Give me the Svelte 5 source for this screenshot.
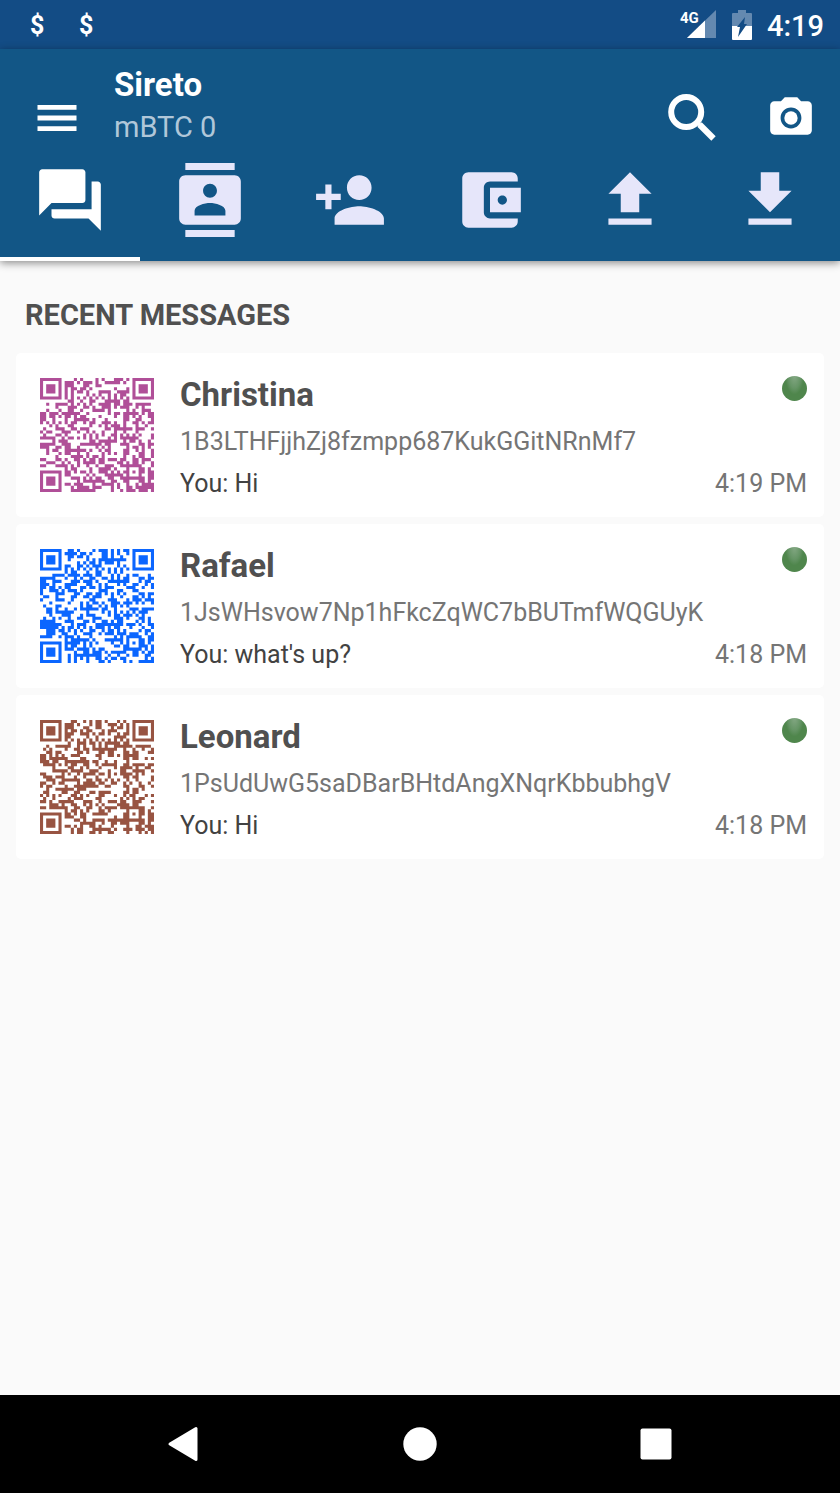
<script module>
  const EXP = new Array(512);
  const LOG = new Array(256);
  let value = 1;
  for (let i = 0; i < 255; i++) {
    EXP[i] = value;
    EXP[i + 255] = value;
    LOG[value] = i;
    value <<= 1;
    if (value & 256) value ^= 285;
  }
  const mul = (a, b) => (a && b ? EXP[LOG[a] + LOG[b]] : 0);

  // Reed-Solomon remainder of n codewords
  function ecc(data, n) {
    let gen = [1];
    for (let i = 0; i < n; i++) {
      const next = new Array(gen.length + 1).fill(0);
      gen.forEach((g, j) => {
        next[j] ^= g;
        next[j + 1] ^= mul(g, EXP[i]);
      });
      gen = next;
    }
    const rem = [...data, ...new Array(n).fill(0)];
    for (let i = 0; i < data.length; i++) {
      const f = rem[i];
      for (let j = 0; j < gen.length; j++) rem[i + j] ^= mul(gen[j], f);
    }
    return rem.slice(data.length);
  }

  const MASKS = {
    1: { format: '001001110111110', test: (r) => r % 2 === 0 },
    4: { format: '000011101100010', test: (r, c) => ((r >> 1) + Math.floor(c / 3)) % 2 === 0 }
  };

  // QR symbol version 5 (37 modules), correction level H, UTF-8 bytes
  function qr(text, mask) {
    const N = 37;
    const bits = [];
    const put = (v, n) => {
      for (let i = n - 1; i >= 0; i--) bits.push((v >> i) & 1);
    };
    put(7, 4);
    put(26, 8);
    put(4, 4);
    put(text.length, 8);
    for (const ch of text) put(ch.charCodeAt(0), 8);
    put(0, Math.min(4, 368 - bits.length));
    while (bits.length % 8) bits.push(0);
    const data = [];
    for (let i = 0; i < bits.length; i += 8) data.push(parseInt(bits.slice(i, i + 8).join(''), 2));
    for (let pad = 236; data.length < 46; pad ^= 253) data.push(pad);

    const blocks = [data.slice(0, 11), data.slice(11, 22), data.slice(22, 34), data.slice(34, 46)];
    const checks = blocks.map((b) => ecc(b, 22));
    const words = [];
    for (let i = 0; i < 12; i++) blocks.forEach((b) => i < b.length && words.push(b[i]));
    for (let i = 0; i < 22; i++) checks.forEach((b) => words.push(b[i]));

    const m = Array.from({ length: N }, () => new Array(N).fill(null));
    for (const [r0, c0] of [[0, 0], [0, N - 7], [N - 7, 0]])
      for (let r = -1; r < 8; r++)
        for (let c = -1; c < 8; c++) {
          if (r0 + r < 0 || c0 + c < 0 || r0 + r >= N || c0 + c >= N) continue;
          const d = Math.max(Math.abs(r - 3), Math.abs(c - 3));
          m[r0 + r][c0 + c] = d !== 2 && d !== 4 ? 1 : 0;
        }
    for (let r = -2; r <= 2; r++)
      for (let c = -2; c <= 2; c++) m[30 + r][30 + c] = Math.max(Math.abs(r), Math.abs(c)) !== 1 ? 1 : 0;
    for (let i = 8; i < N - 8; i++) m[6][i] = m[i][6] = i % 2 ? 0 : 1;
    const f = MASKS[mask].format.split('').map(Number);
    for (let i = 0; i < 15; i++) {
      if (i < 8) m[8][i < 6 ? i : i + 1] = f[i];
      else m[i === 8 ? 7 : 14 - i][8] = f[i];
      if (i < 7) m[N - 1 - i][8] = f[i];
      else m[8][N - 15 + i] = f[i];
    }
    m[N - 8][8] = 1;

    let k = 0;
    let up = true;
    for (let c = N - 1; c > 0; c -= 2) {
      if (c === 6) c = 5;
      for (let i = 0; i < N; i++) {
        const r = up ? N - 1 - i : i;
        for (const cc of [c, c - 1]) {
          if (m[r][cc] !== null) continue;
          const bit = k < words.length * 8 ? (words[k >> 3] >> (7 - (k & 7))) & 1 : 0;
          k++;
          m[r][cc] = bit ^ (MASKS[mask].test(r, cc) ? 1 : 0);
        }
      }
      up = !up;
    }
    let d = '';
    m.forEach((row, r) => row.forEach((v, c) => { if (v) d += `M${c} ${r}h1v1h-1z`; }));
    return d;
  }
</script>

<script>
  const contacts = [
    { name: 'Christina', address: '1B3LTHFjjhZj8fzmpp687KukGGitNRnMf7', message: 'You: Hi', time: '4:19 PM', mask: 1, color: '#b04f98' },
    { name: 'Rafael', address: '1JsWHsvow7Np1hFkcZqWC7bBUTmfWQGUyK', message: "You: what's up?", time: '4:18 PM', mask: 4, color: '#0b66ff' },
    { name: 'Leonard', address: '1PsUdUwG5saDBarBHtdAngXNqrKbbubhgV', message: 'You: Hi', time: '4:18 PM', mask: 1, color: '#985442' }
  ];

  const tabs = [
    { label: 'Messages', d: 'M21 6h-2v9H6v2c0 .55.45 1 1 1h11l4 4V7c0-.55-.45-1-1-1zm-4 6V3c0-.55-.45-1-1-1H3c-.55 0-1 .45-1 1v14l4-4h10c.55 0 1-.45 1-1z' },
    { label: 'Contacts', d: 'M20 0H4v2.3h16V0zM4 24h16v-2.3H4V24zM20 4H4c-1.1 0-2 .9-2 2v12c0 1.1.9 2 2 2h16c1.1 0 2-.9 2-2V6c0-1.1-.9-2-2-2zm-8 2.75c1.24 0 2.25 1.01 2.25 2.25s-1.01 2.25-2.25 2.25S9.75 10.24 9.75 9 10.76 6.75 12 6.75zM17 17H7v-1.5c0-1.67 3.33-2.5 5-2.5s5 .83 5 2.5V17z' },
    { label: 'Add contact', d: 'M15 12c2.21 0 4-1.79 4-4s-1.79-4-4-4-4 1.79-4 4 1.79 4 4 4zm-9-2V7H4v3H1v2h3v3h2v-3h3v-2H6zm9 4c-2.67 0-8 1.34-8 4v2h16v-2c0-2.66-5.33-4-8-4z' },
    { label: 'Wallet', d: 'M21 18v1c0 1.1-.9 2-2 2H5c-1.11 0-2-.9-2-2V5c0-1.1.89-2 2-2h14c1.1 0 2 .9 2 2v1h-9c-1.11 0-2 .9-2 2v8c0 1.1.89 2 2 2h9zm-9-2h10V8H12v8zm4-2.5c-.83 0-1.5-.67-1.5-1.5s.67-1.5 1.5-1.5 1.5.67 1.5 1.5-.67 1.5-1.5 1.5z' },
    { label: 'Send', d: 'M9 16h6v-6h4l-7-7-7 7h4zM5 18h14v2H5z' },
    { label: 'Receive', d: 'M19 9h-4V3H9v6H5l7 7 7-7zM5 18v2h14v-2H5z' }
  ];

  let active = $state(0);
</script>

<div class="screen">
  <div class="status">
    <span class="coin">$</span>
    <span class="coin">$</span>
    <svg class="signal" viewBox="0 0 36 30" aria-hidden="true">
      <path d="M36 0v28H7z" fill="#6489b0" />
      <path d="M25 10.5V28H7z" fill="#fff" />
      <text x="0" y="13">4G</text>
    </svg>
    <svg class="battery" viewBox="0 0 20 30" aria-hidden="true">
      <path d="M6 0h8v3h5q1 0 1 1v12H0V4q0-1 1-1h5z" fill="#6489b0" />
      <path d="M0 16h20v13q0 1-1 1H1q-1 0-1-1z" fill="#fff" />
      <path d="M13 7l-1 7h3L6 27l2-10H5z" fill="#134c85" />
    </svg>
    <span class="clock">4:19</span>
  </div>

  <header>
    <div class="toolbar">
      <button class="menu" aria-label="Menu">
        <svg viewBox="0 0 24 24"><path d="M3 18h18v-2.2H3V18zm0-4.9h18v-2.2H3v2.2zM3 6v2.2h18V6H3z" /></svg>
      </button>
      <div class="account">
        <h1>Sireto</h1>
        <p>mBTC 0</p>
      </div>
      <button class="search" aria-label="Search">
        <svg viewBox="0 0 48 48">
          <circle cx="18.2" cy="18" r="15" fill="none" stroke="#fff" stroke-width="6" />
          <path d="M28 27l5 5" stroke="#fff" stroke-width="3.5" />
          <path d="M31.5 30.5l14 14" stroke="#fff" stroke-width="6.2" />
        </svg>
      </button>
      <button class="camera" aria-label="Scan code">
        <svg viewBox="0 0 24 24">
          <circle cx="12" cy="12" r="3.2" />
          <path d="M9 2L7.17 4H4c-1.1 0-2 .9-2 2v12c0 1.1.9 2 2 2h16c1.1 0 2-.9 2-2V6c0-1.1-.9-2-2-2h-3.17L15 2H9zm3 15c-2.76 0-5-2.24-5-5s2.24-5 5-5 5 2.24 5 5-2.24 5-5 5z" />
        </svg>
      </button>
    </div>
    <nav class="tabs">
      {#each tabs as tab, i}
        <button class:active={active === i} aria-label={tab.label} onclick={() => (active = i)}>
          <svg viewBox="0 0 24 24"><path d={tab.d} /></svg>
        </button>
      {/each}
    </nav>
  </header>

  <main>
    <h2>RECENT MESSAGES</h2>
    <ul>
      {#each contacts as contact}
        <li>
          <svg class="qr" viewBox="0 0 37 37" aria-hidden="true">
            <path d={qr('bitcoin:' + contact.address, contact.mask)} fill={contact.color} />
          </svg>
          <div class="details">
            <div class="row">
              <h3>{contact.name}</h3>
              <span class="online"></span>
            </div>
            <p class="address">{contact.address}</p>
            <div class="row">
              <p class="message">{contact.message}</p>
              <time>{contact.time}</time>
            </div>
          </div>
        </li>
      {/each}
    </ul>
  </main>

  <footer>
    <button aria-label="Back">
      <svg viewBox="0 0 36 36"><path d="M4 18L30 2.5v31z" stroke="#fff" stroke-width="3" stroke-linejoin="round" /></svg>
    </button>
    <button aria-label="Home">
      <svg viewBox="0 0 36 36"><circle cx="18" cy="18" r="16.7" /></svg>
    </button>
    <button aria-label="Overview">
      <svg viewBox="0 0 36 36"><rect x="2.5" y="2.5" width="31" height="31" rx="2" /></svg>
    </button>
  </footer>
</div>

<style>
  :global(body) {
    margin: 0;
  }
  .screen {
    display: flex;
    flex-direction: column;
    min-height: 100vh;
    background: #fafafa;
    font-family: Roboto, sans-serif;
  }
  h1, h2, h3, p, ul {
    margin: 0;
    padding: 0;
  }
  button {
    padding: 0;
    border: 0;
    background: none;
    color: #fff;
    cursor: pointer;
  }
  svg {
    display: block;
    fill: currentColor;
  }
  .status {
    display: flex;
    align-items: center;
    height: 49px;
    padding: 0 16px 0 30px;
    background: #134c85;
    color: #fff;
  }
  .coin {
    width: 49px;
    padding-top: 2px;
    font-size: 25px;
    font-weight: 700;
  }
  .signal {
    width: 36px;
    height: 30px;
    margin-left: auto;
    overflow: visible;
  }
  .signal text {
    font-family: Roboto, sans-serif;
    font-size: 15px;
    font-weight: 700;
    fill: #fff;
  }
  .battery {
    width: 20px;
    height: 30px;
    margin: 0 15px 0 16px;
  }
  .clock {
    padding-top: 2px;
    font-size: 29px;
    font-weight: 500;
  }
  header {
    position: relative;
    background: #125686;
    box-shadow: 0 2px 8px rgba(0, 0, 0, 0.45);
  }
  .toolbar {
    display: flex;
    align-items: flex-end;
    height: 99px;
    padding: 0 24px 0 31px;
  }
  .toolbar button {
    display: flex;
    align-items: center;
    height: 60px;
  }
  .menu svg {
    width: 52px;
  }
  .account {
    flex: 1;
    margin-left: 31px;
    color: #fff;
  }
  .account h1 {
    font-size: 33px;
    font-weight: 700;
    line-height: 42px;
  }
  .account p {
    font-size: 29px;
    line-height: 42px;
    color: #b0c7d9;
  }
  .search svg {
    width: 48px;
  }
  .camera {
    margin-left: 50px;
  }
  .camera svg {
    width: 50px;
  }
  .tabs {
    display: grid;
    grid-template-columns: repeat(6, 1fr);
  }
  .tabs button {
    display: flex;
    justify-content: center;
    padding: 15px 0 20px;
    border-bottom: 4px solid transparent;
    color: #e6e6fa;
  }
  .tabs .active {
    border-color: #fff;
    color: #fff;
  }
  .tabs svg {
    width: 74px;
  }
  main {
    flex: 1;
    padding: 33px 16px;
  }
  h2 {
    padding: 0 9px;
    font-size: 29px;
    font-weight: 700;
    line-height: 42px;
    color: #505050;
  }
  ul {
    display: grid;
    gap: 7px;
    margin-top: 17px;
    list-style: none;
  }
  li {
    display: flex;
    gap: 26px;
    padding: 21px 17px 12px 24px;
    border-radius: 5px;
    background: #fff;
  }
  .qr {
    flex: none;
    width: 114px;
    height: 114px;
    margin-top: 4px;
  }
  .details {
    flex: 1;
  }
  .row {
    display: flex;
    justify-content: space-between;
  }
  h3 {
    font-size: 33px;
    font-weight: 700;
    line-height: 42px;
    color: #505050;
  }
  .online {
    width: 25px;
    height: 25px;
    margin-top: 2px;
    border-radius: 50%;
    background: radial-gradient(ellipse at 50% 0, #84a884 0, #659465 35%, #4f864c 52%);
  }
  .address, .message, time {
    font-size: 25px;
    line-height: 42px;
    color: #757575;
  }
  .address {
    margin-top: 5px;
  }
  .message {
    color: #424242;
  }
  footer {
    display: flex;
    justify-content: center;
    gap: 200px;
    padding: 31px 0;
    background: #000;
  }
  footer svg {
    width: 36px;
  }
</style>
